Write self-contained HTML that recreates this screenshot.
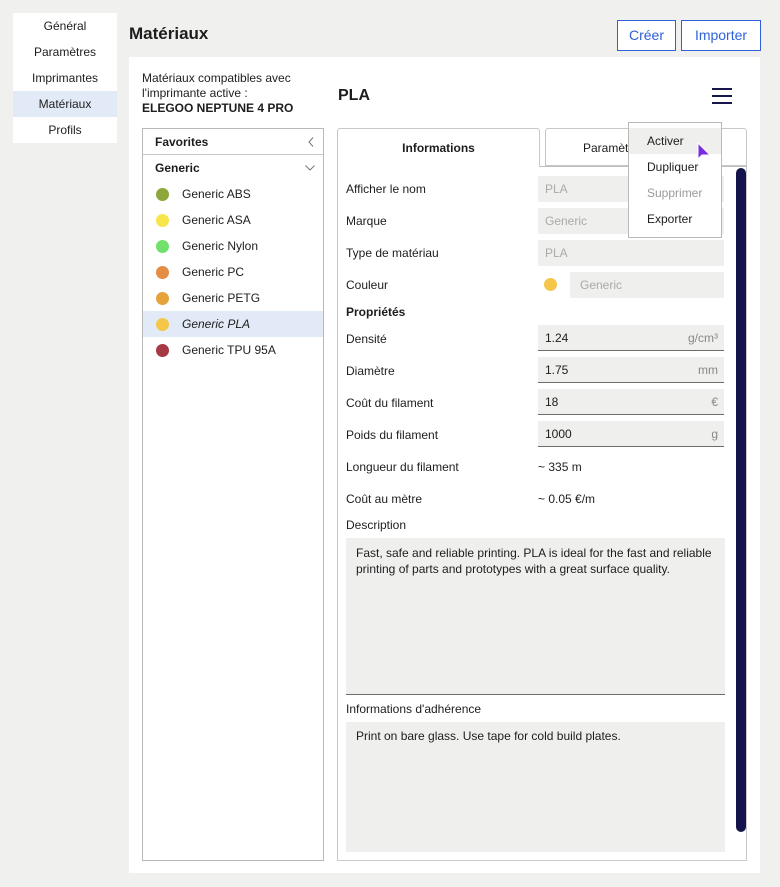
<!DOCTYPE html>
<html><head><meta charset="utf-8"><style>
*{box-sizing:border-box;margin:0;padding:0}
body{width:780px;height:887px;background:#f0f0ef;font-family:"Liberation Sans",sans-serif;font-size:12px;color:#1d1d1d;position:relative;overflow:hidden}
.a{position:absolute}
.nav{left:13px;top:13px;width:104px;height:130px;background:#fff}
.nav div{height:26px;line-height:26px;text-align:center;font-size:12px}
.nav .s{background:#e3eaf7}
.btn{top:20px;height:31px;border:1px solid #2f62d8;color:#2f62d8;background:#fff;font-size:14px;line-height:29px;text-align:center}
.main{left:129px;top:57px;width:631px;height:816px;background:#fff}
.list{left:142px;top:128px;width:182px;height:733px;border:1px solid #b9b9b9;background:#fff}
.it{position:absolute;left:0;width:180px;height:26px;line-height:26px;padding-left:39px}
.dot{position:absolute;left:13px;top:7px;width:13px;height:13px;border-radius:50%}
.lbl{position:absolute;left:346px}
.f{position:absolute;left:538px;width:186px;height:26px;background:#efefee;line-height:26px;padding-left:7px;font-size:12px}
.f.g{color:#aaa}
.f.u{border-bottom:1px solid #6b6b6b}
.f .un{position:absolute;right:6px;top:0;color:#888}
.menu{left:628px;top:122px;width:94px;height:116px;background:#fff;border:1px solid #b9b9b9;padding-top:5px}
.menu div{height:26px;line-height:26px;padding-left:18px}
</style></head><body>
<div class="a nav"><div>Général</div><div>Paramètres</div><div>Imprimantes</div><div class="s">Matériaux</div><div>Profils</div></div>
<div class="a" style="left:129px;top:24px;font-size:17px;font-weight:bold">Matériaux</div>
<div class="a btn" style="left:617px;width:59px">Créer</div>
<div class="a btn" style="left:681px;width:80px">Importer</div>
<div class="a main"></div>
<div class="a" style="left:142px;top:71px;line-height:15px">Matériaux compatibles avec<br>l'imprimante active :<br><b>ELEGOO NEPTUNE 4 PRO</b></div>
<div class="a" style="left:338px;top:87px;font-size:16px;font-weight:bold">PLA</div>
<div class="a" style="left:712px;top:88px;width:20px;height:2px;background:#16164a"></div>
<div class="a" style="left:712px;top:95px;width:20px;height:2px;background:#16164a"></div>
<div class="a" style="left:712px;top:102px;width:20px;height:2px;background:#16164a"></div>
<div class="a list">
<div class="it" style="top:0;padding-left:12px;font-weight:bold;border-bottom:1px solid #c8c8c8">Favorites<svg style="position:absolute;right:9px;top:8px" width="6" height="10"><path d="M5 0.5 L1 5 L5 9.5" fill="none" stroke="#777" stroke-width="1"/></svg></div>
<div class="it" style="top:26px;padding-left:12px;font-weight:bold">Generic<svg style="position:absolute;right:8px;top:10px" width="10" height="6"><path d="M0.5 0.5 L5 5 L9.5 0.5" fill="none" stroke="#777" stroke-width="1"/></svg></div>
<div class="it" style="top:52px"><span class="dot" style="background:#8ea63a"></span>Generic ABS</div>
<div class="it" style="top:78px"><span class="dot" style="background:#f8e54a"></span>Generic ASA</div>
<div class="it" style="top:104px"><span class="dot" style="background:#72e16c"></span>Generic Nylon</div>
<div class="it" style="top:130px"><span class="dot" style="background:#e48d45"></span>Generic PC</div>
<div class="it" style="top:156px"><span class="dot" style="background:#e6a33c"></span>Generic PETG</div>
<div class="it" style="top:182px;background:#e3eaf7;font-style:italic"><span class="dot" style="background:#f4c64a"></span>Generic PLA</div>
<div class="it" style="top:208px"><span class="dot" style="background:#a53a45"></span>Generic TPU 95A</div>
</div>
<div class="a" style="left:337px;top:166px;width:410px;height:695px;border:1px solid #c8c8c8;border-top:1px solid #bdbdbd"></div>
<div class="a" style="left:337px;top:128px;width:203px;height:39px;border:1px solid #c8c8c8;border-bottom:none;background:#fff;border-radius:3px 3px 0 0;text-align:center;line-height:38px;font-weight:bold">Informations</div>
<div class="a" style="left:545px;top:128px;width:202px;height:38px;border:1px solid #c8c8c8;border-radius:3px 3px 0 0;background:#fff;line-height:38px;padding-left:37px">Paramètres</div>
<div class="lbl" style="top:182px">Afficher le nom</div><div class="f g" style="top:176px">PLA</div>
<div class="lbl" style="top:214px">Marque</div><div class="f g" style="top:208px">Generic</div>
<div class="lbl" style="top:246px">Type de matériau</div><div class="f g" style="top:240px">PLA</div>
<div class="lbl" style="top:278px">Couleur</div><span class="a" style="left:544px;top:278px;width:13px;height:13px;border-radius:50%;background:#f4c64a"></span><div class="f g" style="top:272px;left:570px;width:154px;padding-left:10px">Generic</div>
<div class="lbl" style="top:305px;font-weight:bold">Propriétés</div>
<div class="lbl" style="top:332px">Densité</div><div class="f u" style="top:325px">1.24<span class="un">g/cm³</span></div>
<div class="lbl" style="top:364px">Diamètre</div><div class="f u" style="top:357px">1.75<span class="un">mm</span></div>
<div class="lbl" style="top:396px">Coût du filament</div><div class="f u" style="top:389px">18<span class="un">€</span></div>
<div class="lbl" style="top:428px">Poids du filament</div><div class="f u" style="top:421px">1000<span class="un">g</span></div>
<div class="lbl" style="top:460px">Longueur du filament</div><div class="a" style="left:538px;top:460px">~ 335 m</div>
<div class="lbl" style="top:492px">Coût au mètre</div><div class="a" style="left:538px;top:492px">~ 0.05 €/m</div>
<div class="lbl" style="top:518px">Description</div>
<div class="a" style="left:346px;top:538px;width:379px;height:157px;background:#efefee;border-bottom:1px solid #6b6b6b;padding:7px 10px;line-height:16px">Fast, safe and reliable printing. PLA is ideal for the fast and reliable printing of parts and prototypes with a great surface quality.</div>
<div class="lbl" style="top:702px">Informations d'adhérence</div>
<div class="a" style="left:346px;top:722px;width:379px;height:130px;background:#efefee;padding:7px 10px">Print on bare glass. Use tape for cold build plates.</div>
<div class="a" style="left:736px;top:168px;width:10px;height:664px;background:#15134c;border-radius:5px"></div>
<div class="a menu"><div style="background:#efefee">Activer</div><div>Dupliquer</div><div style="color:#999">Supprimer</div><div>Exporter</div></div>
<svg class="a" style="left:696px;top:142px" width="16" height="20"><path d="M2 1 L2 17 L6 13 L14 13 Z" fill="#7a2de0" stroke="#fff" stroke-width="1"/></svg>
</body></html>
